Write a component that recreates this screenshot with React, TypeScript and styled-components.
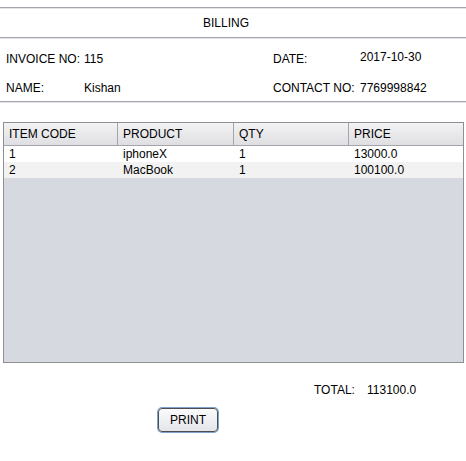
import React from "react";
import styled, { createGlobalStyle } from "styled-components";

const Global = createGlobalStyle`
  html, body { margin: 0; padding: 0; background: #ffffff; }
  body { font-family: "Liberation Sans", Arial, sans-serif; font-size: 12px; color: #000; }
`;

const Page = styled.div`
  width: 466px;
  height: 461px;
  padding-top: 7px;
  box-sizing: border-box;
  display: flex;
  flex-direction: column;
`;

const Rule = styled.div`
  height: 1px;
  background: #a5a5ad;
  border-bottom: 1px solid #e4e4e8;
`;

const Title = styled.div`
  height: 28px;
  display: flex;
  align-items: center;
  justify-content: center;
  padding-right: 14px;
`;

const InfoGrid = styled.div`
  display: grid;
  grid-template-columns: 78px 189px 87px 1fr;
  grid-template-rows: 29px 29px;
  padding: 5px 0 6px 6px;
  height: 62px;
  box-sizing: border-box;
`;

const Cell = styled.div<{ $shift?: number }>`
  display: flex;
  align-items: center;
  white-space: nowrap;
  position: relative;
  top: ${(p) => p.$shift ?? 0}px;
`;

const TableWrap = styled.div`
  margin: 19px 2px 0 3px;
  height: 241px;
  border: 1px solid #8e8f93;
  background: #d6d9df;
  box-sizing: border-box;
  display: flex;
  flex-direction: column;
`;

const Row = styled.div<{ $bg: string }>`
  display: grid;
  grid-template-columns: 114px 116px 115px 1fr;
  height: 16px;
  background: ${(p) => p.$bg};
`;

const HeadRow = styled.div`
  display: grid;
  grid-template-columns: 114px 116px 115px 1fr;
  height: 22px;
  background: linear-gradient(#f3f3f5, #dfdfe3);
  border-bottom: 1px solid #a4a5aa;
`;

const HeadCell = styled.div<{ $last?: boolean }>`
  display: flex;
  align-items: center;
  padding-left: 5px;
  border-right: ${(p) => (p.$last ? "none" : "1px solid #a4a5aa")};
`;

const BodyCell = styled.div`
  display: flex;
  align-items: center;
  padding-left: 5px;
  line-height: 14px;
`;

const TotalRow = styled.div`
  display: flex;
  padding-left: 314px;
  margin-top: 20px;
  height: 14px;
  align-items: center;
`;

const TotalLabel = styled.span`
  width: 53px;
`;

const ButtonRow = styled.div`
  padding-left: 158px;
  margin-top: 11px;
`;

const Button = styled.button`
  width: 60px;
  height: 24px;
  font-family: "Liberation Sans", Arial, sans-serif;
  font-size: 12px;
  color: #000;
  border: 1px solid #4a4d52;
  border-radius: 4px;
  box-shadow: 0 0 0 1px #7da3c9;
  background: linear-gradient(#fbfbfc, #e3e5ea);
  padding: 0;
`;

const rows = [
  { code: "1", product: "iphoneX", qty: "1", price: "13000.0" },
  { code: "2", product: "MacBook", qty: "1", price: "100100.0" },
];

export default function App() {
  return (
    <>
      <Global />
      <Page>
        <Rule />
        <Title>BILLING</Title>
        <Rule />
        <InfoGrid>
          <Cell>INVOICE NO:</Cell>
          <Cell>115</Cell>
          <Cell>DATE:</Cell>
          <Cell $shift={-2}>2017-10-30</Cell>
          <Cell>NAME:</Cell>
          <Cell>Kishan</Cell>
          <Cell>CONTACT NO:</Cell>
          <Cell>7769998842</Cell>
        </InfoGrid>
        <Rule />
        <TableWrap>
          <HeadRow>
            <HeadCell>ITEM CODE</HeadCell>
            <HeadCell>PRODUCT</HeadCell>
            <HeadCell>QTY</HeadCell>
            <HeadCell $last>PRICE</HeadCell>
          </HeadRow>
          {rows.map((r, i) => (
            <Row key={r.code} $bg={i % 2 === 0 ? "#ffffff" : "#f2f2f2"}>
              <BodyCell>{r.code}</BodyCell>
              <BodyCell>{r.product}</BodyCell>
              <BodyCell>{r.qty}</BodyCell>
              <BodyCell>{r.price}</BodyCell>
            </Row>
          ))}
        </TableWrap>
        <TotalRow>
          <TotalLabel>TOTAL:</TotalLabel>
          <span>113100.0</span>
        </TotalRow>
        <ButtonRow>
          <Button>PRINT</Button>
        </ButtonRow>
      </Page>
    </>
  );
}
